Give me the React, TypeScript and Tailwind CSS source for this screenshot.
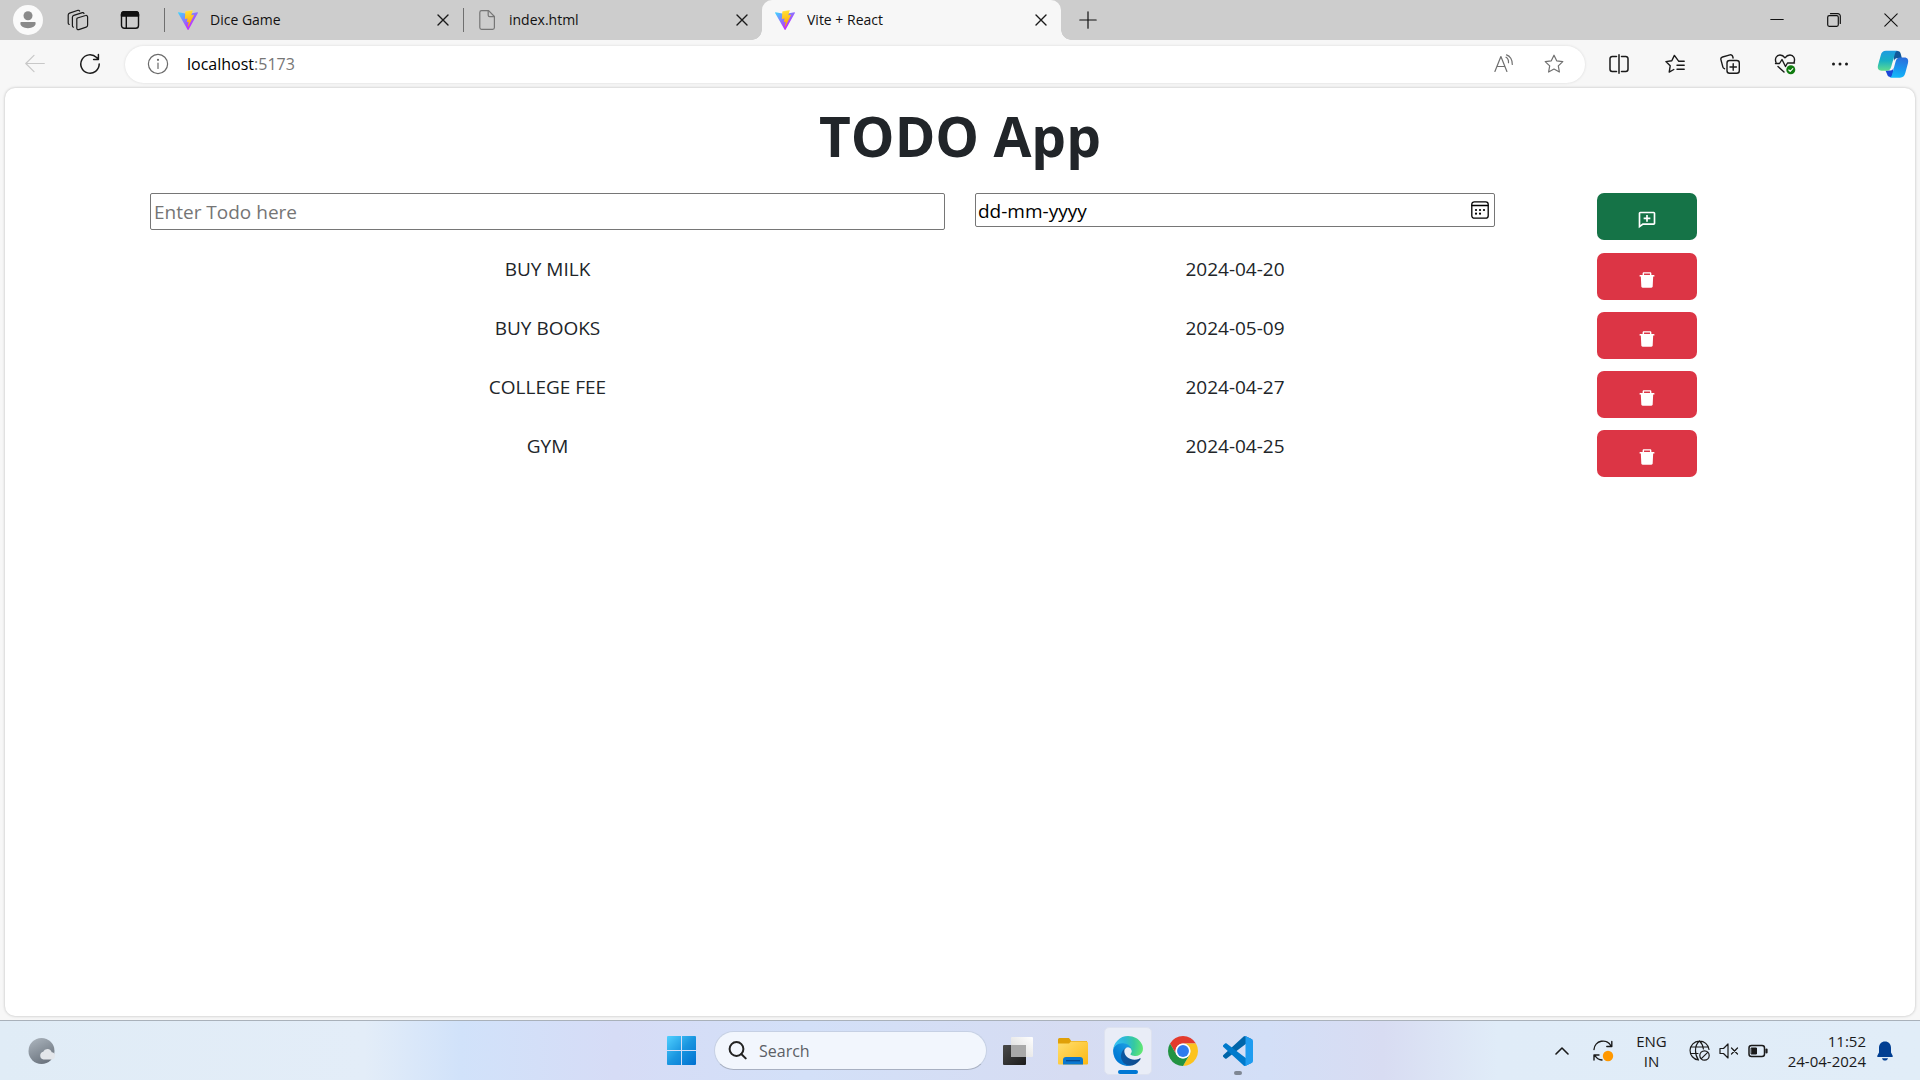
import React, { useState } from "react";
import { BiCommentAdd } from "react-icons/bi";
import { AiFillDelete } from "react-icons/ai";

type IconProps = { className?: string; children?: React.ReactNode; box?: number; stroke?: number };

function Line({ className = "size-5", children, box = 20, stroke = 1.2 }: IconProps) {
  return (
    <svg
      className={className}
      viewBox={`0 0 ${box} ${box}`}
      fill="none"
      stroke="currentColor"
      strokeWidth={stroke}
      strokeLinecap="round"
      strokeLinejoin="round"
      aria-hidden="true"
    >
      {children}
    </svg>
  );
}

function ViteLogo() {
  return (
    <svg className="size-5 shrink-0" viewBox="0 0 256 257" aria-hidden="true">
      <defs>
        <linearGradient id="viteA" x1="-.828%" x2="57.636%" y1="7.652%" y2="78.411%">
          <stop offset="0%" stopColor="#41D1FF" />
          <stop offset="100%" stopColor="#BD34FE" />
        </linearGradient>
        <linearGradient id="viteB" x1="43.376%" x2="50.316%" y1="2.242%" y2="89.03%">
          <stop offset="0%" stopColor="#FFEA83" />
          <stop offset="8.333%" stopColor="#FFDD35" />
          <stop offset="100%" stopColor="#FFA800" />
        </linearGradient>
      </defs>
      <path fill="url(#viteA)" d="M255.153 37.938L134.897 252.976c-2.483 4.44-8.862 4.466-11.382.048L.875 37.958c-2.746-4.814 1.371-10.646 6.827-9.67l120.385 21.517a6.537 6.537 0 0 0 2.322-.004l117.867-21.483c5.438-.991 9.574 4.796 6.877 9.62Z" />
      <path fill="url(#viteB)" d="M185.432.063L96.44 17.501a3.268 3.268 0 0 0-2.634 3.014l-5.474 92.456a3.268 3.268 0 0 0 3.997 3.378l24.777-5.718c2.318-.535 4.413 1.507 3.936 3.838l-7.361 36.047c-.495 2.426 1.782 4.5 4.151 3.78l15.304-4.649c2.372-.72 4.652 1.36 4.15 3.788l-11.698 56.621c-.732 3.542 3.979 5.473 5.943 2.437l1.313-2.028l72.516-144.72c1.215-2.423-.88-5.186-3.54-4.672l-25.505 4.922c-2.396.462-4.435-1.77-3.759-4.114l16.646-57.705c.677-2.35-1.37-4.583-3.769-4.113Z" />
    </svg>
  );
}

function FileIcon() {
  return (
    <svg className="size-5 shrink-0" viewBox="0 0 20 20" fill="none" stroke="#767676" strokeWidth="1.2" strokeLinejoin="round" aria-hidden="true">
      <path d="M4.6.7h7l5.8 5.8v11a1.8 1.8 0 0 1-1.8 1.8h-11a1.8 1.8 0 0 1-1.8-1.8v-15A1.8 1.8 0 0 1 4.6.7Z" />
      <path d="M11.2.9v4.4a1.4 1.4 0 0 0 1.4 1.4h4.6" />
    </svg>
  );
}

function CloseIcon() {
  return (
    <Line className="size-3" box={12} stroke={1.4}>
      <path d="M1 1l10 10M11 1L1 11" />
    </Line>
  );
}

function Tab({ title, icon, active = false }: { title: string; icon: React.ReactNode; active?: boolean }) {
  return (
    <div
      className={
        active
          ? "relative flex h-10 w-[299px] items-center rounded-t-[10px] bg-[#f7f7f7] pl-[13px] pr-2"
          : "flex h-10 w-[298px] items-center pl-[13px] pr-2"
      }
    >
      {active && (
        <>
          <span className="absolute bottom-0 -left-2.5 size-2.5 bg-[radial-gradient(circle_at_0_0,transparent_9.5px,#f7f7f7_10px)]" />
          <span className="absolute bottom-0 -right-2.5 size-2.5 bg-[radial-gradient(circle_at_100%_0,transparent_9.5px,#f7f7f7_10px)]" />
        </>
      )}
      {icon}
      <a href="#" className="ml-3 flex-1 truncate text-sm text-[#111]">
        {title}
      </a>
      <button aria-label={`Close ${title}`} className="flex size-6 items-center justify-center text-[#1a1a1a]">
        <CloseIcon />
      </button>
    </div>
  );
}

function TabStrip() {
  return (
    <header className="flex h-10 items-center bg-[#cdcdcd]">
      <div className="flex flex-1 items-center">
        <button aria-label="Profile" className="ml-[13px] flex size-[30px] items-center justify-center rounded-full bg-[#fafafa]">
          <svg className="size-[30px]" viewBox="0 0 30 30" fill="#8a8a8a" aria-hidden="true">
            <circle cx="15" cy="10.7" r="4.5" />
            <path d="M8.2 17h13.6a.8.8 0 0 1 .8.8v.8c0 2.6-3 4.6-7.6 4.6s-7.6-2-7.6-4.6v-.8a.8.8 0 0 1 .8-.8Z" />
          </svg>
        </button>
        <button aria-label="Workspaces" className="ml-6 flex text-[#1a1a1a]">
          <Line className="size-[22px]" box={22}>
            <path d="M10.4 9l8.2-2.5a1.5 1.5 0 0 1 2 1.4v8.3a2 2 0 0 1-1.4 1.9l-7.4 2.5a1.5 1.5 0 0 1-2-1.4v-8.3A2 2 0 0 1 10.4 9Z" />
            <path d="M6.4 18.2a1.6 1.6 0 0 1-1-1.5V8.3a2 2 0 0 1 1.4-1.9l8.6-2.8a1.4 1.4 0 0 1 1.6.8" />
            <path d="M2.2 15.5a1.6 1.6 0 0 1-1-1.5V6a2 2 0 0 1 1.4-1.9L11 1.3a1.4 1.4 0 0 1 1.6.8" />
          </Line>
        </button>
        <button aria-label="Tab actions" className="ml-[31px] flex text-[#111]">
          <Line className="size-5" box={20} stroke={1.4}>
            <rect x="1.5" y="1.8" width="17" height="16.5" rx="2.8" />
            <path d="M1.5 6V4.2A2.5 2.5 0 0 1 4 1.800h12a2.500 2.500 0 0 1 2.500 2.400V6Z" fill="currentColor" />
            <path d="M6.300 6v12" />
          </Line>
        </button>
        <span className="ml-6 h-6 w-px bg-[#6f6f6f]" />
        <Tab title="Dice Game" icon={<ViteLogo />} />
        <span className="h-6 w-px bg-[#6f6f6f]" />
        <Tab title="index.html" icon={<FileIcon />} />
        <Tab title="Vite + React" icon={<ViteLogo />} active />
        <button aria-label="New tab" className="ml-[18px] flex text-[#111]">
          <Line className="size-[18px]" box={18}>
            <path d="M9 .8v16.400M.8 9h16.400" />
          </Line>
        </button>
      </div>
      <div className="flex h-10 text-[#111]">
        <button aria-label="Minimize" className="flex w-[57px] items-center justify-center">
          <Line className="size-[14px]" box={14}>
            <path d="M.8 6.500h12.400" />
          </Line>
        </button>
        <button aria-label="Restore" className="flex w-[57px] items-center justify-center">
          <Line className="size-[14px]" box={14}>
            <rect x=".7" y="2.700" width="10.600" height="10.600" rx="1.500" />
            <path d="M3.500.7h7.300a2.500 2.500 0 0 1 2.500 2.500v7.300" />
          </Line>
        </button>
        <button aria-label="Close window" className="flex w-[58px] items-center justify-center">
          <Line className="size-[14px]" box={14} stroke={1.100}>
            <path d="M.8.8l12.400 12.400M13.200.8L.8 13.200" />
          </Line>
        </button>
      </div>
    </header>
  );
}

const STAR = "M10 1.200l2.700 5.600 6.100.8-4.500 4.300 1.100 6.100L10 15l-5.400 3 1.100-6.100L1.200 7.600l6.100-.8Z";

function Copilot() {
  return (
    <svg className="h-[28px] w-[32px]" viewBox="0 0 32 28" aria-hidden="true">
      <defs>
        <linearGradient id="cpA" x1="0.300" y1="0" x2="0.300" y2="1">
          <stop offset="0" stopColor="#1d9be0" />
          <stop offset=".5" stopColor="#18b0c4" />
          <stop offset="1" stopColor="#5fdc8f" />
        </linearGradient>
        <linearGradient id="cpB" x1="0.600" y1="0" x2="0.400" y2="1">
          <stop offset="0" stopColor="#2a6fdc" />
          <stop offset=".6" stopColor="#189af0" />
          <stop offset="1" stopColor="#14b8f8" />
        </linearGradient>
      </defs>
      <path fill="#11589a" d="M16 1h4.500c2 0 2.800 1.200 3.300 3l1 4h-4c-2 0-3.200.8-3.800 3Z" />
      <path fill="#1a49d8" d="M8.500 20.500h5c1.800 0 2.500-1 3-3l-1 9.500h-2c-2 0-3-1-3.500-3Z" />
      <path fill="url(#cpA)" d="M9 .8h12c-1.800 0-2.600 1.400-3.200 3.400l-3.600 12.600c-.8 2.700-2 3.900-4.300 3.900H4.500C1.600 20.700.2 18.600 1 15.300L3.700 5.400C4.500 2.400 6 .8 9 .8Z" />
      <path fill="url(#cpB)" d="M23 27.700H12c1.800 0 2.600-1.400 3.200-3.400l3.400-12.800c.8-2.700 2-3.900 4.300-3.900h4.600c2.900 0 4.300 2.100 3.500 5.400l-2.700 10.100c-.8 3-2.300 4.600-5.300 4.600Z" />
    </svg>
  );
}

function Toolbar() {
  return (
    <nav className="flex h-12 items-center bg-[#f7f7f7] pr-[11px] text-[#1a1a1a]">
      <button aria-label="Back" className="ml-[25px] flex text-[#c8c8c8]">
        <Line>
          <path d="M19.300 9.500H.8M9 1.300L.8 9.500 9 17.700" />
        </Line>
      </button>
      <button aria-label="Refresh" className="ml-[34px] flex">
        <Line className="size-[22px]" box={22} stroke={1.500}>
          <path d="M20.200 11a9.200 9.200 0 1 1-2.600-6.400l1.600 1.600M19.400 1.600v4.800h-4.800" />
        </Line>
      </button>
      <div className="ml-6 flex h-[37px] flex-1 items-center rounded-full bg-white pl-[22px] pr-[21px] shadow-[0_0_3px_rgba(0,0,0,0.12)]">
        <button aria-label="Site information" className="flex text-[#6a6a6a]">
          <Line className="size-[22px]" box={22}>
            <circle cx="11" cy="11" r="9.600" />
            <path d="M11 10v5.500" />
            <circle cx="11" cy="6.800" r=".5" fill="currentColor" />
          </Line>
        </button>
        <a href="#" className="ml-[18px] flex-1 text-base text-black">
          localhost<span className="text-[#767676]">:5173</span>
        </a>
        <button aria-label="Read aloud" className="flex text-[#6f6f6f]">
          <Line>
            <path d="M.9 17.500L6.900 2.500l6 15M3 12.500h7.800M12 3.200c1.700 1 2.700 3 2.500 5.500M12.500.8c3.500 1 6 5 5.800 9.700" />
          </Line>
        </button>
        <button aria-label="Favorite this page" className="ml-[30px] flex text-[#6f6f6f]">
          <Line>
            <path d={STAR} />
          </Line>
        </button>
      </div>
      <div className="flex items-center">
        <button aria-label="Split screen" className="ml-6 flex">
          <Line stroke={1.500}>
            <path d="M7.500 2.500H3.200A2.200 2.200 0 0 0 1 4.700v10.600a2.200 2.200 0 0 0 2.200 2.200h4.300M12.500 2.500h4.300A2.200 2.200 0 0 1 19 4.700v10.600a2.200 2.200 0 0 1-2.200 2.200h-4.300M10 .8v18.400" />
          </Line>
        </button>
        <button aria-label="Favorites" className="ml-9 flex">
          <Line stroke={1.400}>
            <path d="M19.200 7.300h-5.400L9.400 1.400 6.800 6.800l-5.900.8 4.300 4.200-1 6.300 4.600-2.600M12 11.200h7.200M12 15.200h7.200" />
          </Line>
        </button>
        <button aria-label="Collections" className="ml-[35px] flex">
          <Line stroke={1.400}>
            <rect x="7" y="6.500" width="12.300" height="12.700" rx="2.500" />
            <path d="M13.200 9.800v6.400M10 13h6.400M4.500 14.700a2.300 2.300 0 0 1-1.600-1.600L.9 5.600A2.200 2.200 0 0 1 2.500 3L10 .9a2.200 2.200 0 0 1 2.700 1.600l.4 1.500" />
          </Line>
        </button>
        <button aria-label="Browser essentials" className="ml-[34px] flex">
          <Line className="size-[22px]" box={22} stroke={1.400}>
            <path d="M2 9.500C.5 5.500 2.500 2 6 2c2 0 3.700 1 5 2.800C12.300 3 14 2 16 2c3.500 0 5.500 3.500 4 7.500M1.500 10.500h4L8 6.500l3.500 7 2-3.500h7M4 13.500l6 5.500" />
            <circle cx="16.800" cy="16.800" r="4.500" fill="#107c10" stroke="none" />
            <path d="M14.800 17l1.400 1.400 2.600-2.800" stroke="#fff" strokeWidth="1.100" />
          </Line>
        </button>
        <button aria-label="Settings and more" className="ml-[34px] flex">
          <svg className="size-5" viewBox="0 0 20 20" fill="currentColor" aria-hidden="true">
            <circle cx="3.500" cy="10" r="1.500" />
            <circle cx="10" cy="10" r="1.500" />
            <circle cx="16.500" cy="10" r="1.500" />
          </svg>
        </button>
        <button aria-label="Copilot" className="ml-[27px] flex">
          <Copilot />
        </button>
      </div>
    </nav>
  );
}

const ITEMS = [
  { name: "BUY MILK", date: "2024-04-20" },
  { name: "BUY BOOKS", date: "2024-05-09" },
  { name: "COLLEGE FEE", date: "2024-04-27" },
  { name: "GYM", date: "2024-04-25" },
];

function TodoPage() {
  const [items, setItems] = useState(ITEMS);
  const [name, setName] = useState("");
  const [date, setDate] = useState("");

  const add = () => {
    if (!name) return;
    setItems([...items, { name, date }]);
    setName("");
    setDate("");
  };

  return (
    <main className="mx-[5px] mb-1 flex-1 rounded-[10px] bg-white text-center text-[19px] text-[#212529] shadow-[0_0_3px_rgba(0,0,0,0.25)]">
      <div className="mx-auto max-w-[1650px]">
        <h1 className="pt-3 pb-[21px] text-[55px] leading-[72px] font-bold">TODO App</h1>
        <div className="mb-[13px] grid grid-cols-12">
          <div className="col-span-6 px-[15px]">
            <input
              type="text"
              aria-label="Todo"
              placeholder="Enter Todo here"
              value={name}
              onChange={(e) => setName(e.target.value)}
              className="block h-[37px] w-full rounded-[2px] border border-[#767676] px-[3px] text-black placeholder:text-[#757575]"
            />
          </div>
          <div className="col-span-4 px-[15px]">
            <div className="flex h-[34px] items-center rounded-[2px] border border-[#767676] pl-0.5 pr-[5px]">
              <input
                type="text"
                aria-label="Due date"
                placeholder="dd-mm-yyyy"
                value={date}
                onChange={(e) => setDate(e.target.value)}
                className="h-full min-w-0 flex-1 pt-0.5 text-black outline-none placeholder:text-black"
              />
              <button aria-label="Open calendar" className="flex text-black">
                <Line className="size-[18px]" box={18} stroke={1.300}>
                  <rect x=".8" y=".8" width="16.400" height="16.400" rx="2.500" />
                  <path d="M1 4.500h16" />
                  <path d="M5 9h.01M9 9h.01M13 9h.01M5 12.700h.01M9 12.700h.01" strokeWidth="2.200" />
                </Line>
              </button>
            </div>
          </div>
          <div className="col-span-2 flex justify-center pr-0.5">
            <button
              aria-label="Add todo"
              onClick={add}
              className="flex h-[47px] w-[100px] items-center justify-center rounded-[7px] bg-[#157347] pt-1.5 text-white"
            >
              <BiCommentAdd className="size-5" />
            </button>
          </div>
        </div>
        <ul className="flex flex-col gap-3">
          {items.map((item, i) => (
            <li key={i} className="grid grid-cols-12 leading-8">
              <span className="col-span-6">{item.name}</span>
              <span className="col-span-4">{item.date}</span>
              <div className="col-span-2 flex justify-center pr-0.5">
                <button
                  aria-label={`Delete ${item.name}`}
                  onClick={() => setItems(items.filter((_, j) => j !== i))}
                  className="flex h-[47px] w-[100px] items-center justify-center rounded-[7px] bg-[#dc3545] pt-1.5 text-white"
                >
                  <AiFillDelete className="size-5" />
                </button>
              </div>
            </li>
          ))}
        </ul>
      </div>
    </main>
  );
}

function Weather() {
  return (
    <svg className="size-7" viewBox="0 0 28 28" aria-hidden="true">
      <defs>
        <linearGradient id="moon" x1="0.200" y1="0" x2="0.700" y2="1">
          <stop offset="0" stopColor="#a9b2bb" />
          <stop offset="1" stopColor="#68717b" />
        </linearGradient>
      </defs>
      <circle cx="13.500" cy="14" r="13" fill="url(#moon)" />
      <path d="M15.500 22.500a4 4 0 0 1-.3-7.800 4.500 4.500 0 0 1 8.500.5A3.700 3.700 0 0 1 24 22.500Z" fill="#e3e6ea" />
    </svg>
  );
}

function WindowsLogo() {
  return (
    <svg className="size-[29px]" viewBox="0 0 29 29" aria-hidden="true">
      <defs>
        <linearGradient id="win" gradientUnits="userSpaceOnUse" x1="0" y1="0" x2="29" y2="29">
          <stop offset="0" stopColor="#50d0ff" />
          <stop offset=".5" stopColor="#1a96e0" />
          <stop offset="1" stopColor="#0070d0" />
        </linearGradient>
      </defs>
      <g fill="url(#win)">
        <path d="M1 0h13v14H0V1a1 1 0 0 1 1-1ZM15 0h13a1 1 0 0 1 1 1v13H15ZM0 15h14v14H1a1 1 0 0 1-1-1ZM15 15h14v13a1 1 0 0 1-1 1H15Z" />
      </g>
    </svg>
  );
}

function TaskView() {
  return (
    <svg className="size-[30px]" viewBox="0 0 30 30" aria-hidden="true">
      <defs>
        <linearGradient id="tvA" x1="0" y1="0" x2="1" y2="1">
          <stop offset="0" stopColor="#4a4a4a" />
          <stop offset="1" stopColor="#1c1c1c" />
        </linearGradient>
        <linearGradient id="tvB" x1="0" y1="1" x2="1" y2="0">
          <stop offset="0" stopColor="#d8d8d8" />
          <stop offset="1" stopColor="#ffffff" />
        </linearGradient>
      </defs>
      <rect x="0" y="9" width="23" height="20" rx="1" fill="url(#tvA)" />
      <rect x="8" y="1" width="22" height="20" rx="1" fill="url(#tvB)" />
      <rect x="8" y="9" width="15" height="12" fill="#a9a9a9" />
    </svg>
  );
}

function Folder() {
  return (
    <svg className="size-[30px]" viewBox="0 0 30 30" aria-hidden="true">
      <defs>
        <linearGradient id="fold" x1="0" y1="0" x2="1" y2="1">
          <stop offset="0" stopColor="#ffdf70" />
          <stop offset="1" stopColor="#fcb813" />
        </linearGradient>
      </defs>
      <path d="M0 3.500A1.500 1.500 0 0 1 1.500 2H10c1 0 1.500.5 2 1.200L13.200 5H29v6H0Z" fill="#e0a008" />
      <path d="M0 7.500h11l2-2h15.500A1.500 1.500 0 0 1 30 7v20.500a1 1 0 0 1-1 1H1a1 1 0 0 1-1-1Z" fill="url(#fold)" />
      <path d="M5 28.500V24a3 3 0 0 1 3-3h14a3 3 0 0 1 3 3v4.500Z" fill="#0a78d0" />
      <path d="M8 24.700h14" stroke="#06478c" strokeWidth="1.200" />
    </svg>
  );
}

function Edge() {
  return (
    <svg className="size-[30px]" viewBox="4 4 257 257" aria-hidden="true">
      <defs>
        <linearGradient id="edA" x1="63" y1="177" x2="242" y2="177" gradientUnits="userSpaceOnUse">
          <stop offset="0" stopColor="#0c59a4" />
          <stop offset="1" stopColor="#114a8b" />
        </linearGradient>
        <linearGradient id="edB" x1="158" y1="100" x2="45" y2="222" gradientUnits="userSpaceOnUse">
          <stop offset="0" stopColor="#1b9de2" />
          <stop offset=".2" stopColor="#1595df" />
          <stop offset=".7" stopColor="#0680d7" />
          <stop offset="1" stopColor="#0078d4" />
        </linearGradient>
        <radialGradient id="edC" cx="30" cy="70" r="240" gradientUnits="userSpaceOnUse">
          <stop offset="0" stopColor="#35c1f1" />
          <stop offset=".35" stopColor="#2cb8d8" />
          <stop offset=".65" stopColor="#36c9a0" />
          <stop offset="1" stopColor="#66eb6e" />
        </radialGradient>
      </defs>
      <path fill="url(#edA)" d="M235.680 195.460a93.730 93.730 0 0 1-10.540 4.710 101.870 101.870 0 0 1-35.900 6.460c-47.320 0-88.540-32.550-88.540-74.320A31.480 31.480 0 0 1 117.130 105c-42.800 1.800-53.800 46.400-53.800 72.530 0 73.880 68.090 81.370 82.760 81.370 7.910 0 19.840-2.300 27-4.560l1.310-.440a128.340 128.340 0 0 0 66.600-52.800 4 4 0 0 0-5.320-5.640z" />
      <path fill="url(#edB)" d="M110.340 246.340A79.200 79.200 0 0 1 87.600 225 80.720 80.720 0 0 1 117.130 105c3.120-1.470 8.450-4.130 15.540-4a32.350 32.350 0 0 1 25.690 13 31.880 31.880 0 0 1 6.360 18.660c0-.210 24.460-79.600-80-79.600-43.900 0-80 41.660-80 78.210a130.150 130.150 0 0 0 12.110 56 128 128 0 0 0 156.380 67.110 75.550 75.550 0 0 1-62.780-8z" />
      <path fill="url(#edC)" d="M156.940 153.780c-.810 1.050-3.300 2.500-3.300 5.660 0 2.610 1.700 5.120 4.720 7.230 14.380 10 41.490 8.680 41.560 8.680a59.560 59.560 0 0 0 30.270-8.350 61.380 61.380 0 0 0 30.430-52.880c.260-22.410-8-37.310-11.340-43.910-21.190-41.450-66.920-65.290-116.670-65.290a128 128 0 0 0-128 126.200c.480-36.540 36.800-66.050 80-66.050 3.500 0 23.460.340 42 10.070 16.340 8.580 24.900 18.940 30.850 29.210 6.180 10.670 7.280 24.150 7.280 29.520s-2.740 13.330-7.800 19.910z" />
    </svg>
  );
}

function Chrome() {
  return (
    <svg className="size-[30px]" viewBox="0 0 48 48" aria-hidden="true">
      <path fill="#e33b2e" d="M24 12H44.780A24 24 0 0 0 3.220 12L13.610 30A12 12 0 0 1 24 12Z" />
      <path fill="#fcc31e" d="M44.780 12H24A12 12 0 0 1 34.390 30L24 48A24 24 0 0 0 44.780 12Z" />
      <path fill="#229342" d="M3.220 12A24 24 0 0 0 24 48L34.390 30A12 12 0 0 1 13.610 30Z" />
      <circle cx="24" cy="24" r="12" fill="#fff" />
      <circle cx="24" cy="24" r="9.500" fill="#2f7bee" />
    </svg>
  );
}

function VsCode() {
  return (
    <svg className="size-[30px]" viewBox="0 0 100 100" aria-hidden="true">
      <path fill="#0065A9" d="M96.461 10.796L75.857.876C73.472-.273 70.622.212 68.750 2.083L1.299 63.583c-1.815 1.654-1.812 4.511.004 6.162l5.510 5.009c1.485 1.350 3.722 1.450 5.321.237L93.361 13.370C96.086 11.303 100 13.246 100 16.667v-.240c0-2.401-1.375-4.589-3.539-5.631Z" />
      <path fill="#007ACC" d="M96.461 89.204l-20.604 9.920c-2.385 1.149-5.235.664-7.107-1.207L1.299 36.417c-1.815-1.654-1.812-4.511.004-6.162l5.510-5.009c1.485-1.350 3.722-1.450 5.321-.237l81.227 61.621c2.725 2.067 6.639.124 6.639-3.297v.240c0 2.401-1.375 4.589-3.539 5.631Z" />
      <path fill="#1F9CF0" d="M75.858 99.126c-2.386 1.148-5.236.662-7.108-1.209C71.056 100.223 75 98.590 75 95.328V4.672C75 1.410 71.056-.223 68.750 2.083 70.622.211 73.472-.274 75.858.874l20.601 9.907C98.623 11.822 100 14.011 100 16.413v67.174c0 2.402-1.377 4.592-3.541 5.633Z" />
    </svg>
  );
}

function Taskbar() {
  return (
    <footer className="grid h-[60px] grid-cols-[1fr_auto_1fr] items-center border-t border-[#a9b1ba] bg-[linear-gradient(90deg,#e0ecf6_0%,#e3edf8_19%,#d1e2fa_24%,#d6dcf6_32%,#d3e0f8_42%,#d6dcf2_56%,#d3dff7_66%,#d8dcf2_72%,#e0ecf8_78%,#e1edf8_100%)]">
      <button aria-label="Weather" className="ml-7 flex w-fit">
        <Weather />
      </button>
      <div className="flex items-center">
        <button aria-label="Start" className="flex">
          <WindowsLogo />
        </button>
        <label className="ml-[18px] flex h-[39px] w-[273px] items-center rounded-full border border-[#c6d0e4] border-b-[#a8b0c2] bg-[#f2f6fd] pl-[13px]">
          <Line className="size-[19px] text-[#222]" box={19} stroke={2}>
            <circle cx="8.500" cy="8" r="6.900" />
            <path d="M13.300 13l4.400 4.400" />
          </Line>
          <input
            type="search"
            aria-label="Search"
            placeholder="Search"
            className="ml-3 w-40 text-base text-black outline-none placeholder:text-[#5c5f66]"
          />
        </label>
        <button aria-label="Task view" className="ml-4 flex">
          <TaskView />
        </button>
        <button aria-label="File Explorer" className="ml-[25px] flex">
          <Folder />
        </button>
        <button aria-label="Microsoft Edge" className="relative ml-4 flex size-12 items-center justify-center rounded-[5px] border border-[#dde2f0] bg-[#e9edf7]">
          <Edge />
          <span className="absolute bottom-0 h-1 w-5 rounded-full bg-[#0078d4]" />
        </button>
        <button aria-label="Google Chrome" className="ml-4 flex">
          <Chrome />
        </button>
        <button aria-label="Visual Studio Code" className="relative ml-4 -mr-[9px] flex size-12 items-center justify-center">
          <VsCode />
          <span className="absolute bottom-0 h-1 w-2 rounded-full bg-[#7f8793]" />
        </button>
      </div>
      <div className="flex items-center justify-end pr-[27px] text-[15px] text-[#1a1a1a]">
        <button aria-label="Show hidden icons" className="flex">
          <Line className="size-[14px]" box={14} stroke={1.600}>
            <path d="M1 10l6-6 6 6" />
          </Line>
        </button>
        <button aria-label="Update" className="ml-[23px] flex">
          <Line className="size-[22px]" box={22} stroke={1.400}>
            <path d="M2 9.500A9 9 0 0 1 19 6M19.800 1.500v5h-5M2 20v-5h5M3 15.500a9 9 0 0 0 7 4.500" />
            <circle cx="16" cy="16" r="5.200" fill="#ff9800" stroke="none" />
          </Line>
        </button>
        <button aria-label="Input language" className="ml-[22px] text-center leading-5">
          ENG
          <br />
          IN
        </button>
        <button aria-label="Network, volume and battery" className="ml-[22px] flex items-center gap-[9px]">
          <Line className="size-[21px]" box={21} stroke={1.200}>
            <path d="M20 9.500A9.500 9.500 0 1 0 9.500 20M1.600 7h17.800M1.600 13.500H9M10.500 1C8 3 6.500 6.500 6.500 10.500S8 18 9.500 20M10.500 1c2.200 2 3.500 4.500 3.900 8" />
            <circle cx="15.500" cy="15.500" r="4.700" />
            <path d="M12.300 18.700l6.400-6.400" />
          </Line>
          <Line className="size-5" box={20} stroke={1.200}>
            <path d="M1 7.500h3.500L9 3v14l-4.500-4.500H1ZM12.500 7l6 6M18.500 7l-6 6" />
          </Line>
          <Line className="h-5 w-5" box={20} stroke={1.500}>
            <rect x="1" y="4.500" width="15.500" height="11" rx="2.500" />
            <rect x="3.500" y="7" width="5" height="6" fill="currentColor" stroke="currentColor" strokeWidth="1" />
            <path d="M18.500 8.500v3" strokeWidth="2.200" />
          </Line>
        </button>
        <button aria-label="Clock" className="ml-5 text-right leading-5">
          11:52
          <br />
          24-04-2024
        </button>
        <button aria-label="Notifications" className="ml-[11px] flex">
          <svg className="h-5 w-4" viewBox="0 0 16 20" fill="#003e92" aria-hidden="true">
            <path d="M8 .5c3.600 0 6 2.700 6 6.200v4.800l1.700 3.200c.3.600 0 1.300-.8 1.300H1.100c-.8 0-1.100-.7-.8-1.300L2 11.500V6.700C2 3.200 4.400.5 8 .5ZM5 17.200h6c-.4 1.400-1.500 2.300-3 2.300s-2.600-.9-3-2.300Z" />
          </svg>
        </button>
      </div>
    </footer>
  );
}

export default function App() {
  return (
    <div className="flex min-h-screen flex-col bg-[#f7f7f7] font-['Open_Sans',sans-serif]">
      <TabStrip />
      <Toolbar />
      <TodoPage />
      <Taskbar />
    </div>
  );
}
